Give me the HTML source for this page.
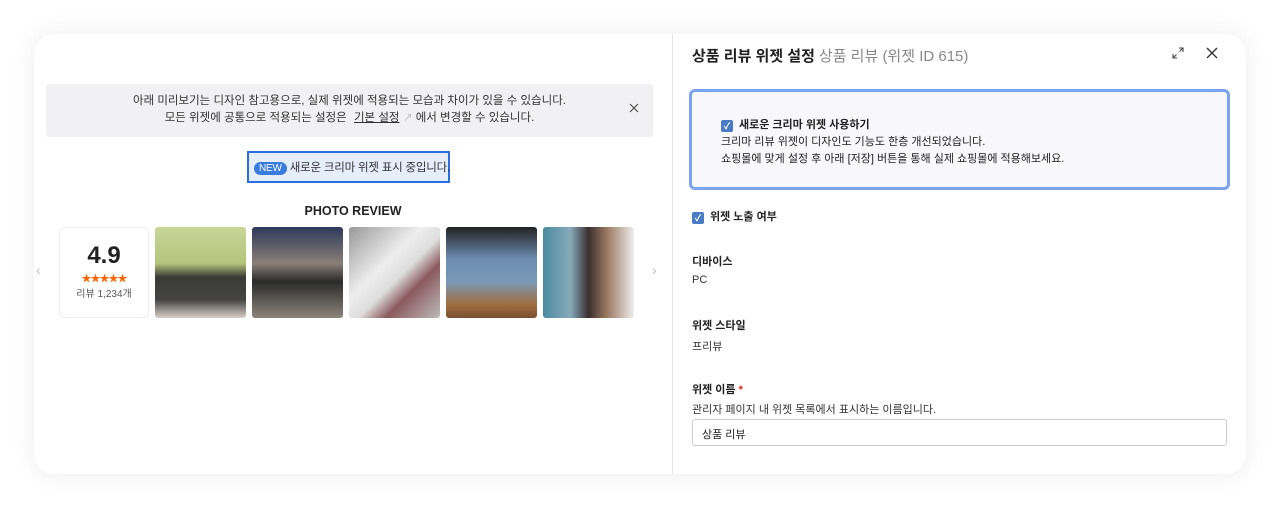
<!DOCTYPE html>
<html><head><meta charset="utf-8"><style>
*{box-sizing:border-box;margin:0;padding:0}
body{width:1280px;height:508px;background:#fff;font-family:"Liberation Sans","Noto Sans CJK KR",sans-serif;color:#222;position:relative;overflow:hidden}
.card{position:absolute;left:34px;top:34px;width:1212px;height:440px;background:#fff;border-radius:20px;box-shadow:0 0 24px rgba(0,0,0,.08);overflow:hidden}
.div{position:absolute;left:638px;top:0;width:1px;height:440px;background:#e6e6e6}
.notice{position:absolute;left:12px;top:50px;width:607px;height:53px;background:#f1f1f3;border-radius:3px;font-size:11.5px;color:#333;text-align:center;line-height:17px;padding-top:9px}
.notice u{margin:0 4px}
.nx{position:absolute;right:14px;top:19px}
.newb{position:absolute;left:213px;top:117px;width:203px;height:32px;border:2px solid #2b6ce0;background:#e6edfb;font-size:11.5px;color:#333;padding:6px 0 0 5px;white-space:nowrap;letter-spacing:-0.2px}
.pill{display:inline-block;background:#3a7be0;color:#fff;border-radius:10px;padding:1px 5px;font-size:10px;margin-right:3px}
.pr{position:absolute;left:0;width:638px;top:170px;text-align:center;font-weight:bold;font-size:12.5px}
.score{position:absolute;left:25px;top:193px;width:90px;height:91px;border:1px solid #eee;border-radius:6px;text-align:center}
.score b{display:block;font-size:24px;margin-top:14px}
.stars{color:#f60;font-size:10px;letter-spacing:-1px}
.score span{font-size:10px;color:#555;display:block}
.ph{position:absolute;top:193px;width:91px;height:91px;border-radius:3px}
.arr{position:absolute;top:228px;color:#bbb;font-size:14px}
.rt{position:absolute;left:658px;}
h1{position:absolute;left:658px;top:11px;font-size:15px;font-weight:bold}
h1 span{font-weight:normal;color:#888;margin-left:4px}
.blue{position:absolute;left:655px;top:55px;width:541px;height:101px;border:3px solid #7aa3f0;border-radius:6px;background:#f8f8fb;padding:25px 0 0 29px;font-size:11px;line-height:17px}
.cb{display:inline-block;width:12px;height:12px;background:#4a7bc5;border-radius:2px;color:#fff;font-size:9px;line-height:12px;text-align:center;vertical-align:-1px;margin-right:6px}
.lab{font-size:11px;font-weight:bold}
.val{font-size:11px;color:#333}
.inp{position:absolute;left:658px;top:385px;width:535px;height:27px;border:1px solid #ccc;border-radius:3px;font-size:11px;padding:6px 9px}
</style></head><body>
<div class="card">
<div class="div"></div>
<div class="notice">아래 미리보기는 디자인 참고용으로, 실제 위젯에 적용되는 모습과 차이가 있을 수 있습니다.<br>모든 위젯에 공통으로 적용되는 설정은 <u>기본 설정</u><span style="color:#aaa;font-size:9px">↗</span> 에서 변경할 수 있습니다.<svg class="nx" width="10" height="10" viewBox="0 0 10 10"><path d="M1 1L9 9M9 1L1 9" stroke="#555" stroke-width="1.2"/></svg></div>
<div class="newb"><span class="pill">NEW</span>새로운 크리마 위젯 표시 중입니다.</div>
<div class="pr">PHOTO REVIEW</div>
<div class="arr" style="left:2px">‹</div><div class="arr" style="left:618px">›</div>
<div class="score"><b>4.9</b><div class="stars">★★★★★</div><span>리뷰 1,234개</span></div>
<div class="ph" style="left:121px;background:linear-gradient(#c8d69a 0%,#b5c47a 40%,#3a3a35 55%,#444 80%,#d8cfc8)"></div>
<div class="ph" style="left:218px;background:linear-gradient(#2e3a5a 0%,#8a7f78 40%,#2a2a2a 60%,#8c857c)"></div>
<div class="ph" style="left:315px;background:linear-gradient(135deg,#999 0%,#eee 40%,#ddd 55%,#8c5a5e 70%,#bbb)"></div>
<div class="ph" style="left:412px;background:linear-gradient(#222 0%,#6c8cb0 35%,#7a9ab8 60%,#a06e40 85%,#7a5030)"></div>
<div class="ph" style="left:509px;background:linear-gradient(90deg,#4a8aa0 0%,#8ab 30%,#3a3030 50%,#9a7860 70%,#eee)"></div>
<h1>상품 리뷰 위젯 설정<span>상품 리뷰 (위젯 ID 615)</span></h1>
<svg style="position:absolute;left:1138px;top:13px" width="12" height="12" viewBox="0 0 12 12"><path d="M7 1H11V5M11 1L7.5 4.5M5 11H1V7M1 11L4.5 7.5" stroke="#444" stroke-width="1.1" fill="none"/></svg>
<svg style="position:absolute;left:1172px;top:13px" width="12" height="12" viewBox="0 0 12 12"><path d="M1 1L11 11M11 1L1 11" stroke="#333" stroke-width="1.4"/></svg>
<div class="blue"><div class="lab"><span class="cb">✓</span>새로운 크리마 위젯 사용하기</div>크리마 리뷰 위젯이 디자인도 기능도 한층 개선되었습니다.<br>쇼핑몰에 맞게 설정 후 아래 [저장] 버튼을 통해 실제 쇼핑몰에 적용해보세요.</div>
<div class="rt lab" style="top:174px"><span class="cb">✓</span>위젯 노출 여부</div>
<div class="rt lab" style="top:219px">디바이스</div><div class="rt val" style="top:240px">PC</div>
<div class="rt lab" style="top:283px">위젯 스타일</div><div class="rt val" style="top:304px">프리뷰</div>
<div class="rt lab" style="top:347px">위젯 이름 <span style="color:#d22">*</span></div>
<div class="rt val" style="top:367px">관리자 페이지 내 위젯 목록에서 표시하는 이름입니다.</div>
<div class="inp">상품 리뷰</div>
</div>
</body></html>
